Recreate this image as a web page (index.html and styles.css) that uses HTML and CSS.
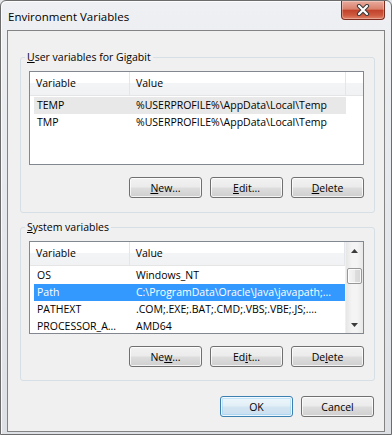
FILE: index.html
```html
<!DOCTYPE html>
<html lang="en">
<head>
    <meta charset="UTF-8">
    <title>Environment Variables</title>
    <link rel="stylesheet" href="styles.css">
</head>
<body>

<div class="window">
    <div class="titlebar">
        <span class="title">Environment Variables</span>
        <div class="close-btn">
            <svg width="16" height="12" viewBox="0 0 16 12">
                <path d="M4 2 L12 10 M12 2 L4 10" stroke="#3a3a3a" stroke-width="4.2" stroke-linecap="round"/>
                <path d="M4 2 L12 10 M12 2 L4 10" stroke="#ffffff" stroke-width="2.2" stroke-linecap="round"/>
            </svg>
        </div>
    </div>

    <div class="client">
        <fieldset class="group group-user">
            <legend><u>U</u>ser variables for Gigabit</legend>
            <div class="listview">
                <div class="lv-main">
                    <div class="lv-header">
                        <div class="col col-var">Variable</div>
                        <div class="col col-val">Value</div>
                        <div class="col col-fill"></div>
                    </div>
                    <div class="lv-rows">
                        <div class="lv-row selected-inactive">
                            <span class="cell cell-var">TEMP</span>
                            <span class="cell cell-val">%USERPROFILE%\AppData\Local\Temp</span>
                        </div>
                        <div class="lv-row">
                            <span class="cell cell-var">TMP</span>
                            <span class="cell cell-val">%USERPROFILE%\AppData\Local\Temp</span>
                        </div>
                    </div>
                </div>
            </div>
            <div class="btn-row">
                <button class="btn"><u>N</u>ew...</button>
                <button class="btn"><u>E</u>dit...</button>
                <button class="btn"><u>D</u>elete</button>
            </div>
        </fieldset>

        <fieldset class="group group-system">
            <legend><u>S</u>ystem variables</legend>
            <div class="listview">
                <div class="lv-main">
                    <div class="lv-header">
                        <div class="col col-var">Variable</div>
                        <div class="col col-val">Value</div>
                    </div>
                    <div class="lv-rows">
                        <div class="lv-row">
                            <span class="cell cell-var">OS</span>
                            <span class="cell cell-val">Windows_NT</span>
                        </div>
                        <div class="lv-row selected">
                            <span class="cell cell-var">Path</span>
                            <span class="cell cell-val">C:\ProgramData\Oracle\Java\javapath;...</span>
                        </div>
                        <div class="lv-row">
                            <span class="cell cell-var">PATHEXT</span>
                            <span class="cell cell-val">.COM;.EXE;.BAT;.CMD;.VBS;.VBE;.JS;....</span>
                        </div>
                        <div class="lv-row">
                            <span class="cell cell-var">PROCESSOR_A...</span>
                            <span class="cell cell-val">AMD64</span>
                        </div>
                    </div>
                </div>
                <div class="scrollbar">
                    <div class="sb-arrow">
                        <svg width="7" height="4" viewBox="0 0 7 4"><path d="M0 4 L3.5 0 L7 4 Z" fill="#3b3b3b"/></svg>
                    </div>
                    <div class="sb-thumb"></div>
                    <div class="sb-track"></div>
                    <div class="sb-arrow">
                        <svg width="7" height="4" viewBox="0 0 7 4"><path d="M0 0 L3.5 4 L7 0 Z" fill="#3b3b3b"/></svg>
                    </div>
                </div>
            </div>
            <div class="btn-row">
                <button class="btn">Ne<u>w</u>...</button>
                <button class="btn">Ed<u>i</u>t...</button>
                <button class="btn">De<u>l</u>ete</button>
            </div>
        </fieldset>

        <div class="dialog-buttons">
            <button class="btn btn-default">OK</button>
            <button class="btn">Cancel</button>
        </div>
    </div>
</div>

</body>
</html>
```

FILE: styles.css
```css
body {
    margin: 0;
    background: #e4e6e9;
    font-family: "Open Sans", "Liberation Sans", sans-serif;
}

.window {
    box-sizing: border-box;
    width: 392px;
    height: 435px;
    padding: 0 6px 2px 6px;
    border: 1px solid #6c6c6c;
    border-radius: 6px 6px 0 0;
    background: linear-gradient(180deg, #eef0f3 0%, #e6e9ed 40%, #dde1e6 100%);
    box-shadow: inset 1px 1px 0 rgba(255, 255, 255, 0.8);
    display: flex;
    flex-direction: column;
}

/* title bar */
.titlebar {
    height: 29px;
    display: flex;
    align-items: center;
    padding-left: 1px;
}
.title {
    font-size: 11.5px;
    color: #000;
    margin-top: 1px;
}
.close-btn {
    margin-left: auto;
    align-self: flex-start;
    box-sizing: border-box;
    width: 44px;
    height: 19px;
    border: 1px solid #7e2c20;
    border-top: none;
    border-radius: 0 0 4px 4px;
    background: linear-gradient(180deg, #e9ab9d 0%, #d9806c 45%, #c2422b 52%, #cf5b40 80%, #e0846a 100%);
    box-shadow: inset 0 0 0 1px rgba(255, 255, 255, 0.3);
    display: flex;
    align-items: center;
    justify-content: center;
}

/* client area */
.client {
    box-sizing: border-box;
    height: 402px;
    border: 1px solid #838383;
    background: #f0f0f0;
    display: flex;
    flex-direction: column;
}

.group {
    box-sizing: border-box;
    width: 355px;
    margin: 0 0 0 12px;
    padding: 7px 10px 14px 8px;
    border: 1px solid #d5dfe5;
    border-radius: 3px;
    min-inline-size: 0;
}
.group-user {
    margin-top: 19px;
}
.group-system {
    margin-top: 7px;
    padding-bottom: 13px;
}
.group legend {
    font-size: 10.5px;
    line-height: 14px;
    padding: 0 2px;
    margin-left: -4px;
    color: #000;
}

/* list view */
.listview {
    height: 94px;
    box-sizing: border-box;
    border: 1px solid #828790;
    background: #fff;
    display: flex;
    overflow: hidden;
}
.group-system .listview {
    height: 93px;
}
.lv-main {
    flex: 1;
    overflow: hidden;
}
.lv-header {
    display: flex;
    height: 24px;
    box-sizing: border-box;
    border-bottom: 1px solid #e5e5e5;
    background: linear-gradient(180deg, #ffffff 0%, #ffffff 48%, #f3f4f6 48%, #f1f2f4 100%);
    font-size: 10.5px;
    line-height: 23px;
}
.col {
    box-sizing: border-box;
    padding-left: 6px;
    border-right: 1px solid #e3e6ea;
    white-space: nowrap;
}
.col-var {
    width: 100px;
}
.col-val {
    width: 216px;
}
.col-fill {
    flex: 1;
    border-right: none;
}
.lv-rows {
    padding-top: 1px;
}
.lv-row {
    display: flex;
    width: 312px;
    height: 17px;
    margin-left: 4px;
    font-size: 10.5px;
    line-height: 17px;
    color: #000;
    white-space: nowrap;
}
.lv-row.selected-inactive {
    background: #e8e8e8;
}
.lv-row.selected {
    background: #3399ff;
    color: #fff;
}
.cell {
    overflow: hidden;
}
.cell-var {
    box-sizing: border-box;
    width: 96px;
    padding-left: 3px;
}
.cell-val {
    flex: 1;
    padding-left: 6px;
}

/* scroll bar */
.scrollbar {
    width: 17px;
    display: flex;
    flex-direction: column;
    background: linear-gradient(90deg, #e6e6e6 0%, #f4f4f4 35%, #f4f4f4 65%, #e8e8e8 100%);
    border-left: 1px solid #f0f0f0;
}
.sb-arrow {
    height: 17px;
    display: flex;
    align-items: center;
    justify-content: center;
}
.sb-thumb {
    margin: 9px 1px 0 1px;
    height: 16px;
    box-sizing: border-box;
    border: 1px solid #979797;
    border-radius: 2px;
    background: linear-gradient(90deg, #f5f5f5 0%, #ececec 50%, #dedede 51%, #d6d6d6 100%);
    box-shadow: inset 0 0 0 1px rgba(255, 255, 255, 0.8);
}
.sb-track {
    flex: 1;
}

/* buttons */
.btn-row {
    display: flex;
    justify-content: flex-end;
    gap: 8px;
    margin-top: 12px;
}
.dialog-buttons {
    display: flex;
    justify-content: flex-end;
    gap: 8px;
    margin: 15px 10px 0 0;
}
.btn {
    box-sizing: border-box;
    width: 73px;
    height: 21px;
    padding: 0;
    border: 1px solid #707070;
    border-radius: 3px;
    background: linear-gradient(180deg, #f2f2f2 0%, #ebebeb 48%, #dddddd 52%, #cfcfcf 100%);
    box-shadow: inset 0 0 0 1px rgba(255, 255, 255, 0.75);
    font-family: "Open Sans", "Liberation Sans", sans-serif;
    font-size: 10.5px;
    color: #000;
}
.btn u {
    text-underline-offset: 1px;
}
.btn-default {
    border-color: #3c7fb1;
    background: linear-gradient(180deg, #eef6fb 0%, #e1eef7 48%, #d3e5f2 52%, #c8def0 100%);
    box-shadow: inset 0 0 0 1px rgba(255, 255, 255, 0.8), inset 0 0 0 2px rgba(120, 200, 240, 0.35);
}
```
